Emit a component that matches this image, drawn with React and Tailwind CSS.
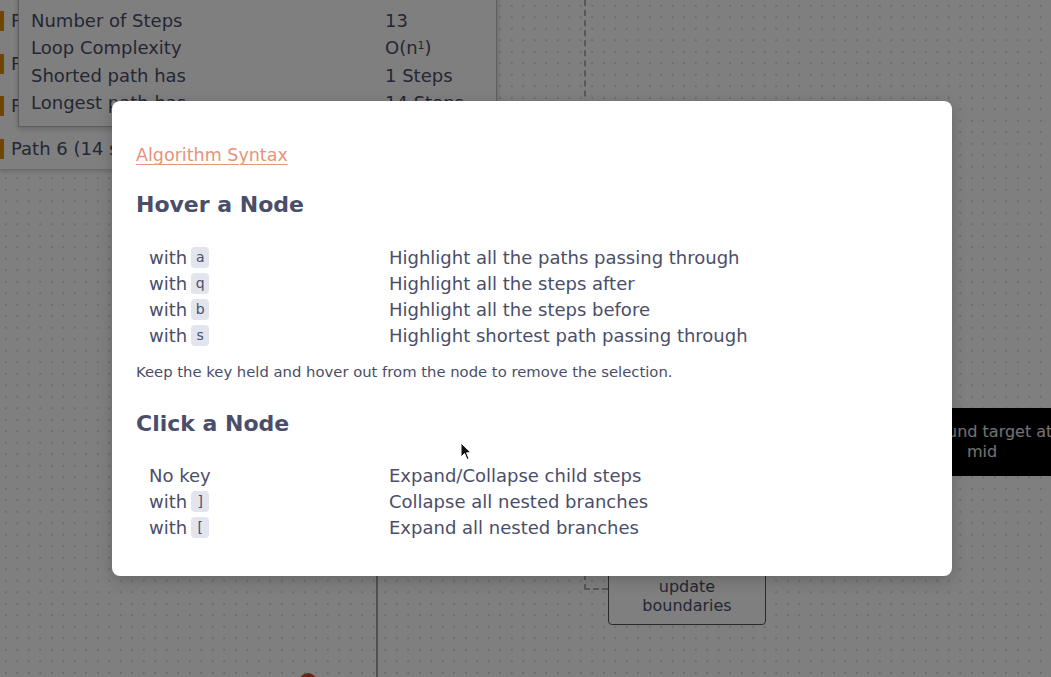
import { useState } from 'react';

const hoverRows = [
  { key: 'a', desc: 'Highlight all the paths passing through' },
  { key: 'q', desc: 'Highlight all the steps after' },
  { key: 'b', desc: 'Highlight all the steps before' },
  { key: 's', desc: 'Highlight shortest path passing through' },
];

const clickRows = [
  { key: null, desc: 'Expand/Collapse child steps' },
  { key: ']', desc: 'Collapse all nested branches' },
  { key: '[', desc: 'Expand all nested branches' },
];

const stats = [
  ['Decision Points', '6'],
  ['Number of Steps', '13'],
  ['Loop Complexity', 'O(n¹)'],
  ['Shorted path has', '1 Steps'],
  ['Longest path has', '14 Steps'],
];

const Key = ({ children }) => (
  <kbd className="inline-flex items-center justify-center h-[21px] min-w-[18px] px-[4px] ml-[4px] rounded-[4px] bg-[#e2e5ee] text-[14px] font-['DejaVu_Sans',sans-serif] text-[#4a4e69] align-middle">
    {children}
  </kbd>
);

const SyntaxRows = ({ rows }) => (
  <div className="flex flex-col pl-[13px]">
    {rows.map((r) => (
      <div key={r.desc} className="grid grid-cols-[240px_1fr] h-[26px] items-center">
        <div className="flex items-center">
          {r.key ? (
            <>
              with <Key>{r.key}</Key>
            </>
          ) : (
            'No key'
          )}
        </div>
        <div>{r.desc}</div>
      </div>
    ))}
  </div>
);

export default function App() {
  const [open] = useState(true);

  return (
    <div className="relative w-[1051px] h-[677px] overflow-hidden bg-white bg-[radial-gradient(circle,#d6d6d6_1px,transparent_1.2px)] bg-[length:11.5px_11.5px] font-['DejaVu_Sans',sans-serif] text-[#4a4e69]">
      {/* Canvas edges */}
      <div className="absolute left-[584px] top-0 h-[590px] border-l-2 border-dashed border-[#b0b0b0]" />
      <div className="absolute left-[584px] top-[588px] w-[24px] border-t-2 border-dashed border-[#b0b0b0]" />
      <div className="absolute left-[376px] top-[420px] h-[257px] border-l-2 border-[#a3a3a3]" />

      {/* Nodes */}
      <div className="absolute left-[608px] top-[548px] w-[158px] h-[77px] rounded-[4px] border border-[#555] bg-white flex flex-col items-center justify-end pb-[9px] text-[16px] leading-[19px]">
        <span>update</span>
        <span>boundaries</span>
      </div>
      <div className="absolute left-[912px] top-[408px] w-[140px] h-[68px] bg-black text-white/90 flex items-center justify-center text-center text-[16px] leading-[20px]">
        <span className="whitespace-nowrap">
          <span className="inline-block translate-x-[10px]">found target at</span>
          <br />
          mid
        </span>
      </div>
      <div className="absolute left-[299px] top-[673px] w-[18px] h-[18px] rounded-full bg-[#d14a2a]" />

      {/* Sidebar with paths */}
      <div className="absolute left-0 top-0 w-[380px] h-[170px] bg-white shadow-[0_2px_4px_rgba(0,0,0,0.15)] border-b border-[#d4d4d4]">
        <div className="flex flex-col pt-[11px] gap-[22.5px] text-[18px] leading-[20px]">
          {[1, 2, 3, 6].map((n) => (
            <div key={n} className="flex items-center gap-[7px]">
              <span className="w-[4px] h-[20px] bg-[#e08a00]" />
              <span>Path {n} (14 steps)</span>
            </div>
          ))}
        </div>
      </div>

      {/* Stats popover */}
      <div className="absolute left-[18px] top-[-26px] w-[479px] h-[153px] bg-white border border-[#bdbdbd] shadow-[0_2px_6px_rgba(0,0,0,0.2)] pl-[12px] pt-[4px]">
        {stats.map(([label, value]) => (
          <div key={label} className="grid grid-cols-[354px_1fr] h-[27.5px] items-center text-[18px]">
            <span>{label}</span>
            <span>
              {value.startsWith('O(') ? (
                <>
                  O(n<sup className="text-[11px]">1</sup>)
                </>
              ) : (
                value
              )}
            </span>
          </div>
        ))}
      </div>

      {/* Backdrop */}
      {open && <div className="absolute inset-0 bg-black/50" />}

      {/* Modal */}
      {open && (
        <div className="absolute left-[112px] top-[101px] w-[840px] h-[475px] rounded-[8px] bg-white shadow-[0_4px_16px_rgba(0,0,0,0.2)] px-[24px] pt-[40px] text-[18px] text-[#4a4e69]">
          <a href="#" className="text-[17.5px] text-[#e8937a] underline underline-offset-[3px] decoration-1 leading-[22px]">
            Algorithm Syntax
          </a>
          <h2 className="mt-[21px] text-[22px] font-semibold leading-[32px] text-[#4a4e69]">Hover a Node</h2>
          <div className="mt-[23px]">
            <SyntaxRows rows={hoverRows} />
          </div>
          <p className="mt-[14px] text-[14.8px] leading-[20px]">
            Keep the key held and hover out from the node to remove the selection.
          </p>
          <h2 className="mt-[26px] text-[22px] font-semibold leading-[32px] text-[#4a4e69]">Click a Node</h2>
          <div className="mt-[22px]">
            <SyntaxRows rows={clickRows} />
          </div>
        </div>
      )}

      {/* Cursor */}
      <svg className="absolute left-[460px] top-[442px]" width="12" height="19" viewBox="0 0 12 19">
        <path d="M1 1 L1 15 L4.5 11.5 L7 17.5 L9 16.7 L6.6 10.8 L11 10.8 Z" fill="#111" stroke="#fff" strokeWidth="1" />
      </svg>
    </div>
  );
}
